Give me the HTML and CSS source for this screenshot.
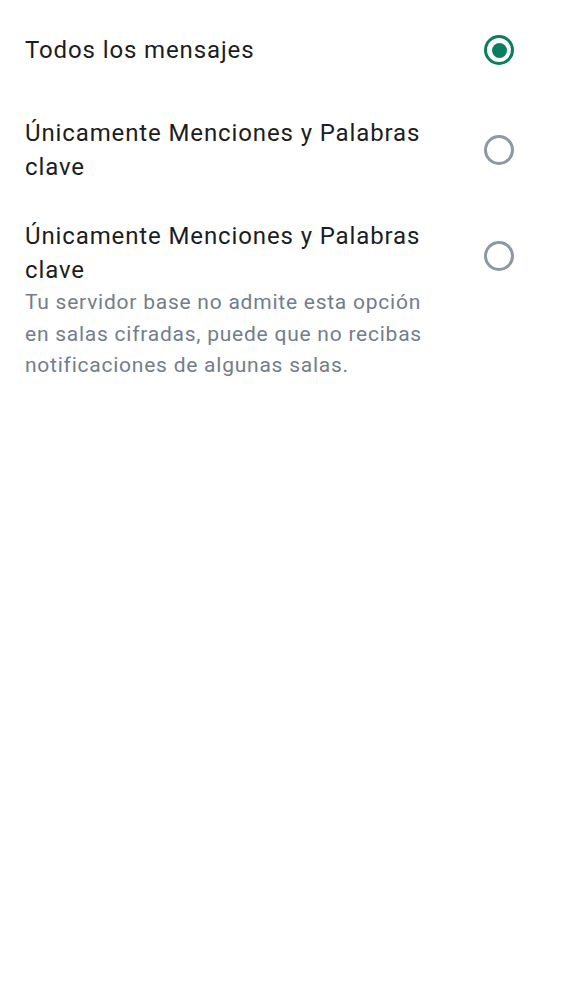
FILE: index.html
```html
<!DOCTYPE html>
<html lang="es">
<head>
<meta charset="utf-8">
<link rel="stylesheet" href="styles.css">
</head>
<body>
<div class="list">
  <div class="row row-first">
    <div class="text">
      <div class="title">Todos los mensajes</div>
    </div>
    <div class="radio checked"><span class="dot"></span></div>
  </div>
  <div class="row row-second">
    <div class="text">
      <div class="title">Únicamente Menciones y Palabras clave</div>
    </div>
    <div class="radio"></div>
  </div>
  <div class="row row-third">
    <div class="text">
      <div class="title">Únicamente Menciones y Palabras clave</div>
      <div class="sub">Tu servidor base no admite esta opción en salas cifradas, puede que no recibas notificaciones de algunas salas.</div>
    </div>
    <div class="radio top"></div>
  </div>
</div>
</body>
</html>
```
FILE: styles.css
```css
html, body {
  margin: 0;
  padding: 0;
  background: #ffffff;
}
body {
  font-family: Roboto, "Noto Sans", sans-serif;
  width: 562px;
  height: 1000px;
}
.list {
  display: flex;
  flex-direction: column;
}
.row {
  display: flex;
  align-items: center;
  padding: 16px 48px 16px 25px;
}
.row-first {
  min-height: 100px;
  padding-top: 0;
  padding-bottom: 0;
  box-sizing: border-box;
}
.row-second {
  padding-top: 16px;
  padding-bottom: 16px;
}
.row-third {
  padding-top: 19px;
  align-items: flex-start;
}
.text {
  width: 414px;
  flex: none;
}
.title {
  font-size: 24px;
  line-height: 34px;
  color: #1b1d22;
  letter-spacing: 0.88px;
}
.sub {
  font-size: 21px;
  line-height: 31.5px;
  color: #737d8c;
  letter-spacing: 0.76px;
}
.radio {
  margin-left: 45px;
  width: 30px;
  height: 30px;
  box-sizing: border-box;
  border: 3px solid #8d97a5;
  border-radius: 50%;
  display: flex;
  align-items: center;
  justify-content: center;
  flex: none;
}
.radio.checked {
  border-color: #0a7e5e;
}
.radio .dot {
  width: 15px;
  height: 15px;
  border-radius: 50%;
  background: #0a7e5e;
}
.radio.top {
  margin-top: 22px;
}
```
